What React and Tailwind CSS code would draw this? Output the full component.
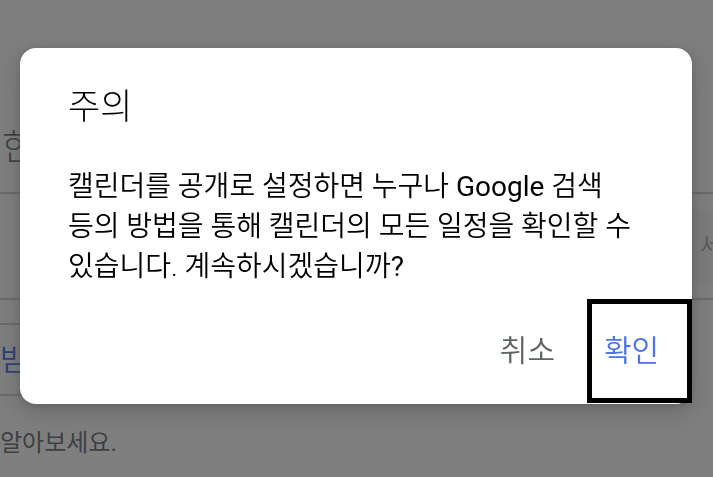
import React from "react";

function SettingsPage() {
  return (
    <main className="min-h-screen overflow-hidden bg-white text-[#7c8085]">
      <h1 className="mt-[124px] pl-0.5 text-4xl leading-[48px] font-light">한</h1>
      <section className="mt-5 flex h-[108px] items-center justify-end border-y-2 border-[#d4d6d9]">
        <button
          type="button"
          className="flex h-[72px] w-[40px] items-center rounded-l bg-[#f8f9fa] pl-[27px] text-2xl font-[350] whitespace-nowrap text-[#aeb2b6]"
        >
          세
        </button>
      </section>
      <button
        type="button"
        className="mt-[23px] block h-[73px] w-[160px] border-y-2 border-[#d4d6d9] text-left text-3xl font-[350] text-[#5b7cf0]"
      >
        받
      </button>
      <p className="mt-[29px] text-2xl leading-9">알아보세요.</p>
    </main>
  );
}

function WarningDialog() {
  return (
    <div className="fixed inset-0 bg-black/50 pt-12 pr-[21px] pl-5">
      <div
        role="alertdialog"
        aria-modal="true"
        aria-labelledby="dialog-title"
        aria-describedby="dialog-text"
        className="rounded-2xl bg-white pb-px shadow-[0_8px_24px_4px_rgba(60,64,67,0.25),0_2px_6px_rgba(60,64,67,0.3)]"
      >
        <h2 id="dialog-title" className="px-12 pt-9 text-[35px] leading-[48px] font-light text-black">
          주의
        </h2>
        <p id="dialog-text" className="mt-[35px] px-12 text-[28px] leading-10 font-[350] text-black">
          캘린더를 공개로 설정하면 누구나 <span className="font-normal">Google</span> 검색
          <br />
          등의 방법을 통해 캘린더의 모든 일정을 확인할 수
          <br />
          있습니다. 계속하시겠습니까<span className="font-normal">?</span>
        </p>
        <div className="mt-3 flex justify-end">
          <button type="button" className="px-8 text-3xl font-[350] text-[#5f6368]">
            취소
          </button>
          <button
            type="button"
            className="flex h-[104px] w-[105px] items-center border-[5px] border-black bg-white pl-3 text-3xl font-[350] whitespace-nowrap text-[#4c73e6]"
          >
            확인
          </button>
        </div>
      </div>
    </div>
  );
}

export default function App() {
  return (
    <div lang="ko" className="font-[Roboto,'Noto_Sans_CJK_KR',sans-serif]">
      <SettingsPage />
      <WarningDialog />
    </div>
  );
}
